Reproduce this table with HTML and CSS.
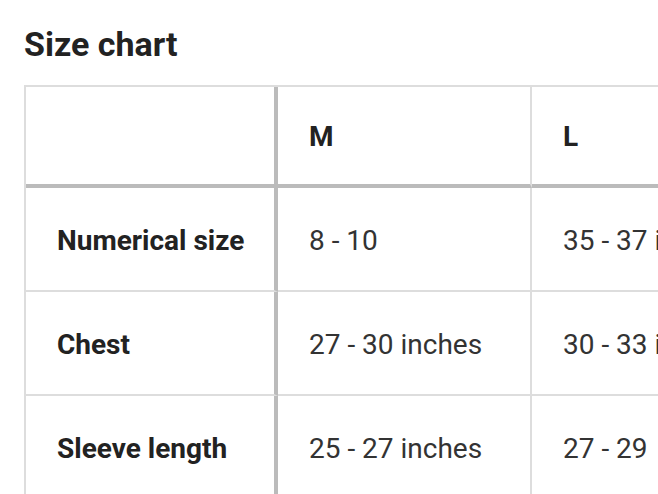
FILE: index.html
```html
<!DOCTYPE html>
<html lang="en">
<head>
<meta charset="utf-8">
<title>Size chart</title>
<link rel="stylesheet" href="styles.css">
</head>
<body>
<section class="size-chart">
  <h2 class="title">Size chart</h2>
  <div class="table-wrap">
    <table class="chart">
      <colgroup>
        <col class="col-label">
        <col class="col-size">
        <col class="col-size">
        <col class="col-size">
      </colgroup>
      <thead>
        <tr>
          <th class="corner"></th>
          <th>M</th>
          <th>L</th>
          <th>XL</th>
        </tr>
      </thead>
      <tbody>
        <tr>
          <th scope="row">Numerical size</th>
          <td>8 - 10</td>
          <td>35 - 37 inches</td>
          <td>38 - 40 inches</td>
        </tr>
        <tr>
          <th scope="row">Chest</th>
          <td>27 - 30 inches</td>
          <td>30 - 33 inches</td>
          <td>33 - 36 inches</td>
        </tr>
        <tr>
          <th scope="row">Sleeve length</th>
          <td>25 - 27 inches</td>
          <td>27 - 29</td>
          <td>29 - 31 inches</td>
        </tr>
      </tbody>
    </table>
  </div>
</section>
</body>
</html>
```

FILE: styles.css
```css
html, body {
  margin: 0;
  padding: 0;
  background: #ffffff;
}

body {
  font-family: Roboto, "Liberation Sans", Arial, sans-serif;
  color: #222222;
}

.size-chart {
  padding-left: 24px;
}

.title {
  margin: 24px 0 21px 0;
  font-size: 34px;
  line-height: 40px;
  font-weight: 700;
  color: #222222;
}

.table-wrap {
  overflow: hidden;
}

.chart {
  table-layout: fixed;
  border-collapse: separate;
  border-spacing: 0;
  width: 1016px;
  border-top: 2px solid #dddddd;
  border-left: 2px solid #dddddd;
  font-size: 28px;
  line-height: 42px;
}

.col-label {
  width: 252px;
}

.col-size {
  width: 254px;
}

.chart th,
.chart td {
  box-sizing: border-box;
  padding: 32px 20px 28px 31px;
  text-align: left;
  vertical-align: middle;
  white-space: nowrap;
  border-right: 2px solid #dddddd;
  border-bottom: 2px solid #dddddd;
}

.chart th {
  font-weight: 700;
  color: #222222;
}

.chart td {
  font-weight: 400;
  color: #333333;
}

.chart thead th {
  padding-top: 29px;
  padding-bottom: 26px;
  border-bottom: 4px solid #bbbbbb;
}

.chart tr > :first-child {
  border-right: 4px solid #bbbbbb;
}
```
